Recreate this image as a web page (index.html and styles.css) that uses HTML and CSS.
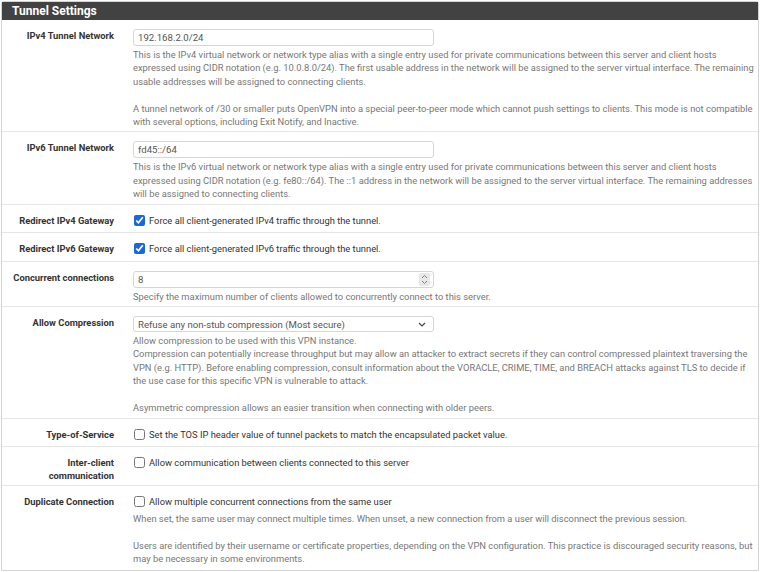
FILE: index.html
```html
<!DOCTYPE html>
<html lang="en">
<head>
    <meta charset="UTF-8">
    <title>Tunnel Settings</title>
    <link rel="stylesheet" href="styles.css">
</head>
<body>
    <div class="panel">
        <div class="panel-heading">
            <h2>Tunnel Settings</h2>
        </div>
        <div class="panel-body">
            <div class="form-group">
                <label class="col-label">IPv4 Tunnel Network</label>
                <div class="col-field">
                    <input class="form-control" type="text" value="192.168.2.0/24">
                    <span class="help-block">This is the IPv4 virtual network or network type alias with a single entry used for private communications between this server and client hosts expressed using CIDR notation (e.g. 10.0.8.0/24). The first usable address in the network will be assigned to the server virtual interface. The remaining usable addresses will be assigned to connecting clients.<br><br>A tunnel network of /30 or smaller puts OpenVPN into a special peer-to-peer mode which cannot push settings to clients. This mode is not compatible with several options, including Exit Notify, and Inactive.</span>
                </div>
            </div>

            <div class="form-group">
                <label class="col-label">IPv6 Tunnel Network</label>
                <div class="col-field">
                    <input class="form-control" type="text" value="fd45::/64">
                    <span class="help-block">This is the IPv6 virtual network or network type alias with a single entry used for private communications between this server and client hosts expressed using CIDR notation (e.g. fe80::/64). The ::1 address in the network will be assigned to the server virtual interface. The remaining addresses will be assigned to connecting clients.</span>
                </div>
            </div>

            <div class="form-group">
                <label class="col-label">Redirect IPv4 Gateway</label>
                <div class="col-field check">
                    <label class="check-line"><input type="checkbox" checked> Force all client-generated IPv4 traffic through the tunnel.</label>
                </div>
            </div>

            <div class="form-group">
                <label class="col-label">Redirect IPv6 Gateway</label>
                <div class="col-field check">
                    <label class="check-line"><input type="checkbox" checked> Force all client-generated IPv6 traffic through the tunnel.</label>
                </div>
            </div>

            <div class="form-group">
                <label class="col-label">Concurrent connections</label>
                <div class="col-field">
                    <div class="input-wrap">
                        <input class="form-control" type="text" value="8">
                        <span class="spinner">
                            <svg width="7" height="11" viewBox="0 0 7 11"><path d="M1 4 L3.5 1.5 L6 4 M1 7 L3.5 9.5 L6 7" fill="none" stroke="#777" stroke-width="0.9"/></svg>
                        </span>
                    </div>
                    <span class="help-block">Specify the maximum number of clients allowed to concurrently connect to this server.</span>
                </div>
            </div>

            <div class="form-group">
                <label class="col-label">Allow Compression</label>
                <div class="col-field">
                    <div class="input-wrap">
                        <select class="form-control select">
                            <option>Refuse any non-stub compression (Most secure)</option>
                        </select>
                        <svg class="chevron" width="8" height="5" viewBox="0 0 8 5"><path d="M1 1 L4 4 L7 1" fill="none" stroke="#444" stroke-width="1.2"/></svg>
                    </div>
                    <span class="help-block">Allow compression to be used with this VPN instance.<br>Compression can potentially increase throughput but may allow an attacker to extract secrets if they can control compressed plaintext traversing the VPN (e.g. HTTP). Before enabling compression, consult information about the VORACLE, CRIME, TIME, and BREACH attacks against TLS to decide if the use case for this specific VPN is vulnerable to attack.<br><br>Asymmetric compression allows an easier transition when connecting with older peers.</span>
                </div>
            </div>

            <div class="form-group">
                <label class="col-label">Type-of-Service</label>
                <div class="col-field check">
                    <label class="check-line"><input type="checkbox"> Set the TOS IP header value of tunnel packets to match the encapsulated packet value.</label>
                </div>
            </div>

            <div class="form-group">
                <label class="col-label">Inter-client communication</label>
                <div class="col-field check">
                    <label class="check-line"><input type="checkbox"> Allow communication between clients connected to this server</label>
                </div>
            </div>

            <div class="form-group">
                <label class="col-label">Duplicate Connection</label>
                <div class="col-field check">
                    <label class="check-line"><input type="checkbox"> Allow multiple concurrent connections from the same user</label>
                    <span class="help-block spaced">When set, the same user may connect multiple times. When unset, a new connection from a user will disconnect the previous session.<br><br>Users are identified by their username or certificate properties, depending on the VPN configuration. This practice is discouraged security reasons, but may be necessary in some environments.</span>
                </div>
            </div>
        </div>
    </div>
</body>
</html>
```

FILE: styles.css
```css
* {
    margin: 0;
    padding: 0;
    box-sizing: border-box;
}

body {
    font-family: Roboto, 'Liberation Sans', sans-serif;
    font-size: 9.35px;
    color: #333;
    background: #fff;
    margin: 1px 1px 0 1px;
}

.panel {
    border: 1px solid #d4d4d4;
    border-radius: 3px 3px 0 0;
    background: #fff;
}

.panel-heading {
    background: #424242;
    height: 18px;
    padding-left: 10px;
}

.panel-heading h2 {
    color: #fff;
    font-size: 12px;
    font-weight: bold;
    line-height: 18px;
}

.form-group {
    display: grid;
    grid-template-columns: 126px 1fr;
    border-bottom: 1px solid #e6e6e6;
}

.form-group:last-child {
    border-bottom: none;
}

.col-label {
    text-align: right;
    font-weight: bold;
    line-height: 13px;
    padding: 9px 14px 3px 0;
    color: #333;
}

.col-field {
    padding: 9px 3px 3px 5px;
}

.col-field.check {
    padding-top: 8px;
    padding-bottom: 4.5px;
}

.form-control {
    display: block;
    width: 301px;
    height: 17px;
    border: 1px solid #d6d6d6;
    border-radius: 3px;
    padding: 0 4px;
    font-family: Roboto, 'Liberation Sans', sans-serif;
    font-size: 9.6px;
    color: #555;
    background: #fff;
}

.input-wrap {
    position: relative;
    width: 301px;
}

.spinner {
    position: absolute;
    right: 4px;
    top: 2px;
    width: 11px;
    height: 13px;
    background: #e8e8e8;
    border-radius: 2px;
    display: flex;
    align-items: center;
    justify-content: center;
}

.select {
    height: 16px;
    appearance: none;
    -webkit-appearance: none;
    padding: 0 4px;
}

.chevron {
    position: absolute;
    right: 8px;
    top: 6px;
}

.help-block {
    display: block;
    margin-top: 2px;
    line-height: 13.4px;
    color: #777;
}

.help-block.spaced {
    margin-top: 3px;
}

.check-line {
    display: flex;
    align-items: center;
    line-height: 15px;
    color: #333;
}

.check-line input {
    width: 11px;
    height: 11px;
    margin: 0 4px 0 1px;
    accent-color: #1b66d8;
}
```
